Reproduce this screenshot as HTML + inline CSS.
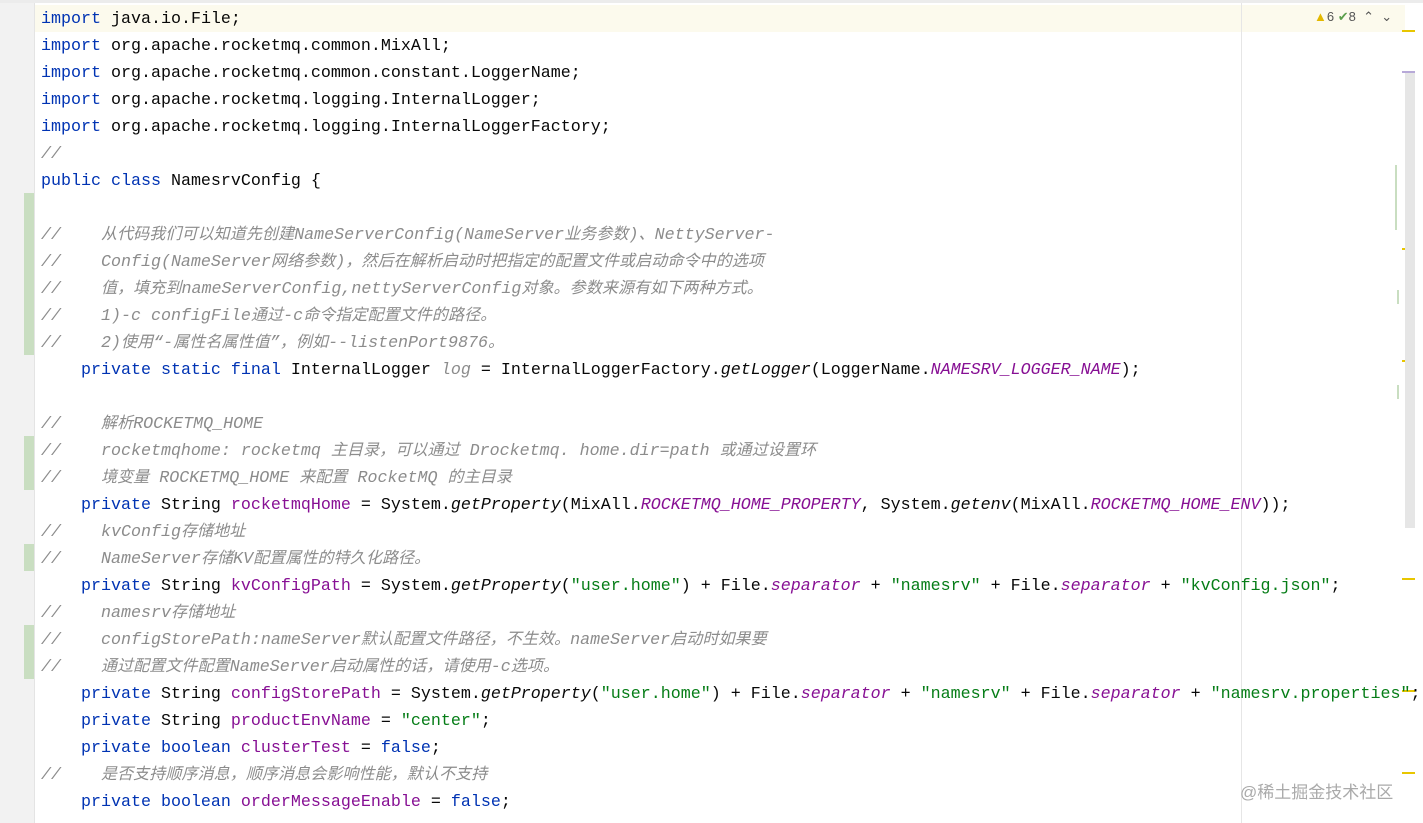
<!DOCTYPE html>
<html><head><meta charset="utf-8"><style>
html,body{margin:0;padding:0}
body{width:1423px;height:823px;overflow:hidden;background:#fff;position:relative;font-family:"Liberation Mono","Noto Sans CJK SC",monospace;}
.top{position:absolute;left:0;top:0;width:1423px;height:3px;background:#ececec}
.gut{position:absolute;left:0;top:3px;width:34px;height:820px;background:#f2f2f2;border-right:1px solid #e4e4e4}
.hl{position:absolute;left:35px;top:5px;width:1370px;height:27px;background:#fcfaed}
.grn{position:absolute;left:24px;width:10px;background:#c9dec1}
.margin{position:absolute;left:1241px;top:3px;width:1px;height:820px;background:#e6e6e6}
.code{position:absolute;left:41px;top:6px;font-size:16.67px;line-height:27px;white-space:pre;color:#080808}
.k{color:#0033b3}
.c{color:#8c8c8c;font-style:italic}
.f{color:#871094;font-style:italic}
.s{color:#067d17}
.m{font-style:italic}
b{font-weight:normal;font-size:16px;letter-spacing:0.1px;font-style:italic}
.mk{position:absolute;left:1402px;width:13px;height:2px;background:#e8c600}
.wm{position:absolute;left:1240px;top:778px;font-family:"Liberation Sans","Noto Sans CJK SC",sans-serif;font-size:17px;color:#aaa}
</style></head><body>
<div class="top"></div>
<div class="hl"></div>
<div class="gut"></div>
<div class="grn" style="top:193px;height:162px"></div>
<div class="grn" style="top:436px;height:54px"></div>
<div class="grn" style="top:544px;height:27px"></div>
<div class="grn" style="top:625px;height:54px"></div>
<div class="margin"></div>
<div style="position:absolute;left:1395px;top:165px;width:2px;height:65px;background:#c9dec1"></div>
<div style="position:absolute;left:1397px;top:290px;width:2px;height:14px;background:#c9dec1"></div>
<div style="position:absolute;left:1397px;top:385px;width:2px;height:14px;background:#c9dec1"></div>
<div class="mk" style="top:30px"></div>
<div class="mk" style="top:248px"></div>
<div class="mk" style="top:360px"></div>
<div class="mk" style="top:578px"></div>
<div class="mk" style="top:690px"></div>
<div class="mk" style="top:772px"></div>
<div style="position:absolute;left:1402px;top:71px;width:13px;height:2px;background:#b7a9d8"></div>
<div style="position:absolute;left:1405px;top:73px;width:10px;height:455px;background:#e6e6e6"></div>
<div style="position:absolute;left:1314px;top:9px;font-family:'Liberation Sans',sans-serif;font-size:13px;color:#555"><span style="color:#e3b800">▲</span>6 <span style="color:#5a9e4b">✔</span>8 &nbsp;⌃ &nbsp;⌄</div>
<div class="code"><span class="k">import</span> java.io.File;
<span class="k">import</span> org.apache.rocketmq.common.MixAll;
<span class="k">import</span> org.apache.rocketmq.common.constant.LoggerName;
<span class="k">import</span> org.apache.rocketmq.logging.InternalLogger;
<span class="k">import</span> org.apache.rocketmq.logging.InternalLoggerFactory;
<span class="c">//</span>
<span class="k">public class</span> NamesrvConfig {

<span class="c">//    <b>从代码我们可以知道先创建</b>NameServerConfig(NameServer<b>业务参数</b>)<b>、</b>NettyServer-</span>
<span class="c">//    Config(NameServer<b>网络参数</b>)<b>，然后在解析启动时把指定的配置文件或启动命令中的选项</b></span>
<span class="c">//    <b>值，填充到</b>nameServerConfig,nettyServerConfig<b>对象。参数来源有如下两种方式。</b></span>
<span class="c">//    1)-c configFile<b>通过</b>-c<b>命令指定配置文件的路径。</b></span>
<span class="c">//    2)<b>使用</b>“-<b>属性名属性值</b>”<b>，例如</b>--listenPort9876<b>。</b></span>
    <span class="k">private static final</span> InternalLogger <span class="c">log</span> = InternalLoggerFactory.<span class="m">getLogger</span>(LoggerName.<span class="f">NAMESRV_LOGGER_NAME</span>);

<span class="c">//    <b>解析</b>ROCKETMQ_HOME</span>
<span class="c">//    rocketmqhome: rocketmq <b>主目录，可以通过</b> Drocketmq. home.dir=path <b>或通过设置环</b></span>
<span class="c">//    <b>境变量</b> ROCKETMQ_HOME <b>来配置</b> RocketMQ <b>的主目录</b></span>
    <span class="k">private</span> String <span class="f" style="font-style:normal">rocketmqHome</span> = System.<span class="m">getProperty</span>(MixAll.<span class="f">ROCKETMQ_HOME_PROPERTY</span>, System.<span class="m">getenv</span>(MixAll.<span class="f">ROCKETMQ_HOME_ENV</span>));
<span class="c">//    kvConfig<b>存储地址</b></span>
<span class="c">//    NameServer<b>存储</b>KV<b>配置属性的特久化路径。</b></span>
    <span class="k">private</span> String <span class="f" style="font-style:normal">kvConfigPath</span> = System.<span class="m">getProperty</span>(<span class="s">"user.home"</span>) + File.<span class="f">separator</span> + <span class="s">"namesrv"</span> + File.<span class="f">separator</span> + <span class="s">"kvConfig.json"</span>;
<span class="c">//    namesrv<b>存储地址</b></span>
<span class="c">//    configStorePath:nameServer<b>默认配置文件路径，不生效。</b>nameServer<b>启动时如果要</b></span>
<span class="c">//    <b>通过配置文件配置</b>NameServer<b>启动属性的话，请使用</b>-c<b>选项。</b></span>
    <span class="k">private</span> String <span class="f" style="font-style:normal">configStorePath</span> = System.<span class="m">getProperty</span>(<span class="s">"user.home"</span>) + File.<span class="f">separator</span> + <span class="s">"namesrv"</span> + File.<span class="f">separator</span> + <span class="s">"namesrv.properties"</span>;
    <span class="k">private</span> String <span class="f" style="font-style:normal">productEnvName</span> = <span class="s">"center"</span>;
    <span class="k">private boolean</span> <span class="f" style="font-style:normal">clusterTest</span> = <span class="k">false</span>;
<span class="c">//    <b>是否支持顺序消息，顺序消息会影响性能，默认不支持</b></span>
    <span class="k">private boolean</span> <span class="f" style="font-style:normal">orderMessageEnable</span> = <span class="k">false</span>;</div>
<div class="wm">@稀土掘金技术社区</div>
</body></html>
